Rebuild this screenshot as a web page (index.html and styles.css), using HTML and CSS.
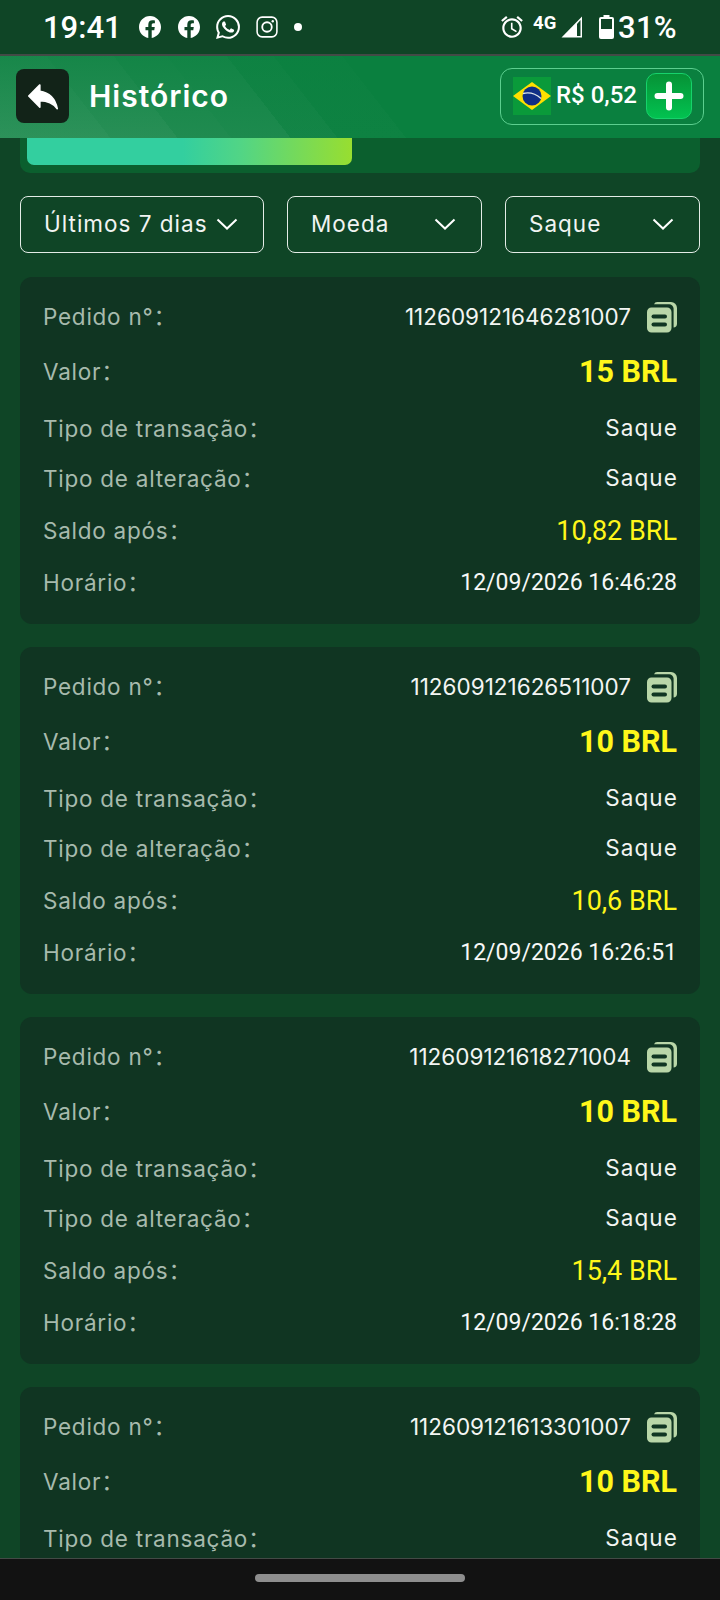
FILE: index.html
```html
<!DOCTYPE html>
<html lang="pt-BR">
<head>
<meta charset="utf-8">
<title>Histórico</title>
<link rel="stylesheet" href="styles.css">
</head>
<body>
<svg class="defs" width="0" height="0" aria-hidden="true">
  <symbol id="copy" viewBox="0 0 30 32">
    <path d="M7 3.200A3.500 3.500 0 0 1 10.500 1H24a6 6 0 0 1 6 6v16a4 4 0 0 1-3.400 3.600V7.500A4.500 4.500 0 0 0 22 3.200Z" fill="#b9d6a8"/>
    <path d="M4.500 6.500H20a4.500 4.500 0 0 1 4.500 4.500v16a4.500 4.500 0 0 1-4.500 4.500H4.500A4.500 4.500 0 0 1 0 27V11a4.500 4.500 0 0 1 4.500-4.500Z" fill="#b9d6a8"/>
    <rect x="4.500" y="13.500" width="15.500" height="4" rx="2" fill="#103522"/>
    <rect x="4.500" y="21.500" width="15.500" height="4" rx="2" fill="#103522"/>
  </symbol>
  <symbol id="fb" viewBox="0 0 24 24">
    <path d="M24 12.073c0-6.627-5.373-12-12-12s-12 5.373-12 12c0 5.990 4.388 10.954 10.125 11.854v-8.385H7.078v-3.470h3.047V9.430c0-3.007 1.792-4.669 4.533-4.669 1.312 0 2.686.235 2.686.235v2.953H15.830c-1.491 0-1.956.925-1.956 1.874v2.250h3.328l-.532 3.470h-2.796v8.385C19.612 23.027 24 18.062 24 12.073z" fill="#fff"/>
  </symbol>
  <symbol id="chev" viewBox="0 0 22 14">
    <path d="M1.500 2.500 11 11.500 20.500 2.500" fill="none" stroke="#fff" stroke-width="2"/>
  </symbol>
</svg>

<header class="status">
  <div class="status-left">
    <span class="clock">19:41</span>
    <svg class="si" viewBox="0 0 24 24"><use href="#fb"/></svg>
    <svg class="si" viewBox="0 0 24 24"><use href="#fb"/></svg>
    <svg class="si wa" viewBox="0 0 24 24"><path d="M17.472 14.382c-.297-.149-1.758-.867-2.030-.967-.273-.099-.471-.148-.670.150-.197.297-.767.966-.940 1.164-.173.199-.347.223-.644.075-.297-.150-1.255-.463-2.390-1.475-.883-.788-1.480-1.761-1.653-2.059-.173-.297-.018-.458.130-.606.134-.133.298-.347.446-.520.149-.174.198-.298.298-.497.099-.198.050-.371-.025-.520-.075-.149-.669-1.612-.916-2.207-.242-.579-.487-.500-.669-.510-.173-.008-.371-.010-.570-.010-.198 0-.520.074-.792.372-.272.297-1.040 1.016-1.040 2.479 0 1.462 1.065 2.875 1.213 3.074.149.198 2.096 3.200 5.077 4.487.709.306 1.262.489 1.694.625.712.227 1.360.195 1.871.118.571-.085 1.758-.719 2.006-1.413.248-.694.248-1.289.173-1.413-.074-.124-.272-.198-.570-.347m-5.421 7.403h-.004a9.870 9.870 0 01-5.031-1.378l-.361-.214-3.741.982.998-3.648-.235-.374a9.860 9.860 0 01-1.510-5.260c.001-5.450 4.436-9.884 9.888-9.884 2.640 0 5.122 1.030 6.988 2.898a9.825 9.825 0 012.893 6.994c-.003 5.450-4.437 9.884-9.885 9.884m8.413-18.297A11.815 11.815 0 0012.050 0C5.495 0 .160 5.335.157 11.892c0 2.096.547 4.142 1.588 5.945L.057 24l6.305-1.654a11.882 11.882 0 005.683 1.448h.005c6.554 0 11.890-5.335 11.893-11.893a11.821 11.821 0 00-3.480-8.413z" fill="#fff"/></svg>
    <svg class="si" viewBox="0 0 24 24" fill="none" stroke="#fff"><rect x="1.200" y="1.200" width="21.600" height="21.600" rx="5.500" stroke-width="1.700"/><circle cx="12" cy="12" r="5.200" stroke-width="2"/><circle cx="18.300" cy="5.700" r="1.300" fill="#fff" stroke="none"/></svg>
    <span class="dot"></span>
  </div>
  <div class="status-right">
    <svg class="alarm" viewBox="0 0 24 24"><path d="M22 5.720l-4.600-3.860-1.290 1.530 4.600 3.860L22 5.720zM7.880 3.390L6.600 1.860 2 5.710l1.290 1.530 4.590-3.850zM12.500 8H11v6l4.750 2.850.75-1.230-4-2.370V8zM12 4c-4.970 0-9 4.030-9 9s4.020 9 9 9c4.970 0 9-4.030 9-9s-4.030-9-9-9zm0 16c-3.870 0-7-3.130-7-7s3.130-7 7-7 7 3.130 7 7-3.130 7-7 7z" fill="#fff"/></svg>
    <span class="net">4G</span>
    <svg class="signal" viewBox="0 0 22 22"><path d="M21 .500V21.500H.500Z" fill="#fff"/><path d="M19.500 4V20H16V8Z" fill="#0f4526"/></svg>
    <svg class="battery" viewBox="0 0 15 24"><path d="M4.500 0h6v2H13a2 2 0 0 1 2 2v18a2 2 0 0 1-2 2H2a2 2 0 0 1-2-2V4a2 2 0 0 1 2-2h2.500Z" fill="#fff"/><rect x="2" y="4" width="11" height="10" fill="#0f4526"/></svg>
    <span class="pct">31%</span>
  </div>
</header>

<div class="appbar">
  <button class="back" type="button">
    <svg viewBox="0 0 24 24"><path d="M10 9V5l-7 7 7 7v-4.100c5 0 8.500 1.600 11 5.100-1-5-4-10-11-11z" fill="#fff" stroke="#fff" stroke-width="1" stroke-linejoin="round"/></svg>
  </button>
  <h1 class="title">Histórico</h1>
  <div class="balance">
    <svg class="flag" viewBox="0 0 38 38">
      <rect width="38" height="38" fill="#0a9a3a"/>
      <path d="M19 5 38 19 19 33 0 19Z" fill="#fedf00"/>
      <circle cx="19" cy="19" r="9.500" fill="#0f2f86"/>
      <path d="M10 16.500c6-1.500 13 .5 18 5" fill="none" stroke="#dfe8e8" stroke-width="1.300"/>
    </svg>
    <span class="amount">R$ 0,52</span>
    <span class="plus">
      <svg viewBox="0 0 30 30"><path d="M15 3.500v23M3.500 15h23" stroke="#fff" stroke-width="6" stroke-linecap="round"/></svg>
    </span>
  </div>
</div>

<main class="content">
  <div class="progress-card"><div class="progress-fill"></div></div>

  <div class="filters">
    <button class="filter f-date" type="button"><span>Últimos 7 dias</span><svg class="chev"><use href="#chev"/></svg></button>
    <button class="filter f-coin" type="button"><span>Moeda</span><svg class="chev"><use href="#chev"/></svg></button>
    <button class="filter f-type" type="button"><span>Saque</span><svg class="chev"><use href="#chev"/></svg></button>
  </div>

  <article class="card">
    <div class="row r-id"><span class="label">Pedido n°：</span><span class="order">112609121646281007<svg class="copy"><use href="#copy"/></svg></span></div>
    <div class="row r-val"><span class="label">Valor：</span><span class="value-big">15 BRL</span></div>
    <div class="row r-tx"><span class="label">Tipo de transação：</span><span class="text">Saque</span></div>
    <div class="row r-alt"><span class="label">Tipo de alteração：</span><span class="text">Saque</span></div>
    <div class="row r-bal"><span class="label">Saldo após：</span><span class="value">10,82 BRL</span></div>
    <div class="row r-time"><span class="label">Horário：</span><span class="time">12/09/2026 16:46:28</span></div>
  </article>

  <article class="card">
    <div class="row r-id"><span class="label">Pedido n°：</span><span class="order">112609121626511007<svg class="copy"><use href="#copy"/></svg></span></div>
    <div class="row r-val"><span class="label">Valor：</span><span class="value-big">10 BRL</span></div>
    <div class="row r-tx"><span class="label">Tipo de transação：</span><span class="text">Saque</span></div>
    <div class="row r-alt"><span class="label">Tipo de alteração：</span><span class="text">Saque</span></div>
    <div class="row r-bal"><span class="label">Saldo após：</span><span class="value">10,6 BRL</span></div>
    <div class="row r-time"><span class="label">Horário：</span><span class="time">12/09/2026 16:26:51</span></div>
  </article>

  <article class="card">
    <div class="row r-id"><span class="label">Pedido n°：</span><span class="order">112609121618271004<svg class="copy"><use href="#copy"/></svg></span></div>
    <div class="row r-val"><span class="label">Valor：</span><span class="value-big">10 BRL</span></div>
    <div class="row r-tx"><span class="label">Tipo de transação：</span><span class="text">Saque</span></div>
    <div class="row r-alt"><span class="label">Tipo de alteração：</span><span class="text">Saque</span></div>
    <div class="row r-bal"><span class="label">Saldo após：</span><span class="value">15,4 BRL</span></div>
    <div class="row r-time"><span class="label">Horário：</span><span class="time">12/09/2026 16:18:28</span></div>
  </article>

  <article class="card">
    <div class="row r-id"><span class="label">Pedido n°：</span><span class="order">112609121613301007<svg class="copy"><use href="#copy"/></svg></span></div>
    <div class="row r-val"><span class="label">Valor：</span><span class="value-big">10 BRL</span></div>
    <div class="row r-tx"><span class="label">Tipo de transação：</span><span class="text">Saque</span></div>
  </article>
</main>

<footer class="navbar"><span class="pill"></span></footer>
</body>
</html>
```

FILE: styles.css
```css
* { box-sizing: border-box; }

html, body {
  margin: 0;
  height: 100%;
}

body {
  width: 720px;
  height: 1600px;
  overflow: hidden;
  display: flex;
  flex-direction: column;
  background: #0f4526;
  color: #fff;
  font-family: Inter, "Noto Sans CJK SC", sans-serif;
}

.defs { position: absolute; }

/* system status bar */
.status {
  flex: 0 0 54px;
  display: flex;
  justify-content: space-between;
  align-items: center;
  padding: 0 43px;
  font-family: Roboto, sans-serif;
}

.status-left, .status-right {
  display: flex;
  align-items: center;
}

.clock {
  font-size: 31px;
  font-weight: 500;
  width: 96px;
}

.si {
  width: 22px;
  height: 22px;
  margin-right: 17px;
}

.wa { width: 24px; height: 24px; margin-left: -1px; margin-right: 16px; }
.dot { width: 8px; height: 8px; border-radius: 50%; background: #fff; margin-left: -1px; }

.alarm { width: 26px; height: 26px; margin-right: 8px; }
.net { font-size: 18.500px; font-weight: 700; align-self: flex-start; margin-top: 3px; width: 28px; }
.signal { width: 22px; height: 22px; margin-right: 16px; }
.battery { width: 15px; height: 24px; margin-right: 4px; }
.pct { font-size: 31px; font-weight: 500; letter-spacing: .3px; }

/* page app bar */
.appbar {
  flex: 0 0 84px;
  display: flex;
  align-items: center;
  padding: 0 16px 2px;
  border-top: 2px solid #434a46;
  background:
    linear-gradient(to bottom, rgba(10,128,63,.6), rgba(10,128,63,0)),
    linear-gradient(52deg,
      rgba(255,255,255,.14) 0 87px,
      rgba(255,255,255,.12) 87px 140px,
      rgba(255,255,255,.09) 140px 182px,
      rgba(255,255,255,.08) 182px 229px,
      rgba(255,255,255,.04) 229px 266px,
      rgba(255,255,255,.015) 266px 320px,
      transparent 320px),
    #0a803f;
}

.back {
  width: 53px;
  height: 54px;
  padding: 0;
  border: 0;
  border-radius: 8px;
  background: #122318;
  display: flex;
  align-items: center;
  justify-content: center;
}

.back svg { width: 38px; height: 38px; }

.title {
  margin: 0 0 0 20px;
  font-size: 30px;
  font-weight: 600;
  letter-spacing: 1px;
  flex: 1;
}

.balance {
  width: 204px;
  height: 57px;
  display: flex;
  align-items: center;
  padding: 0 11px 0 12px;
  border: 1px solid #5ccf8f;
  border-radius: 12px;
}

.flag { width: 38px; height: 38px; flex: none; }

.amount {
  font-family: Roboto, sans-serif;
  font-size: 24px;
  font-weight: 500;
  margin: 0 0 3px 5px;
  flex: 1;
  white-space: nowrap;
}

.plus {
  width: 46px;
  height: 46px;
  border-radius: 10px;
  border: 1px solid #16d36b;
  background: linear-gradient(#069236, #02c250);
  display: flex;
  align-items: center;
  justify-content: center;
}

.plus svg { width: 30px; height: 30px; }

/* scrolled content */
.content {
  flex: 1;
  min-height: 0;
  overflow: hidden;
  padding: 0 20px;
  display: flex;
  flex-direction: column;
}

.progress-card {
  flex: 0 0 35px;
  padding: 0 7px 8px;
  background: #0b5f2e;
  border-radius: 0 0 10px 10px;
}

.progress-fill {
  width: 325px;
  height: 100%;
  border-radius: 0 0 7px 7px;
  background: linear-gradient(90deg, #33cf9f 0 48%, #52d585 66%, #98de30 100%);
}

.filters {
  display: flex;
  gap: 23px;
  margin: 23px 0 23.500px;
}

.filter {
  height: 57px;
  padding: 0 24px 2px 23px;
  border: 1px solid #e4ece7;
  border-radius: 8px;
  background: none;
  color: #f1f4f2;
  font: 400 22.500px Inter, sans-serif;
  letter-spacing: 1px;
  display: flex;
  align-items: center;
  justify-content: space-between;
  white-space: nowrap;
}

.f-date { width: 244px; }
.f-coin { width: 195px; }
.f-type { width: 195px; }

.chev { width: 22px; height: 14px; flex: none; margin-right: 1px; }

/* transaction cards */
.card {
  flex: none;
  background: #103522;
  border-radius: 12px;
  padding: 20px 23px 21px;
  margin-bottom: 23px;
}

.row {
  display: flex;
  justify-content: space-between;
  align-items: center;
  height: 40px;
  white-space: nowrap;
}

.r-val { margin-top: 15px; }
.r-tx { margin-top: 17px; }
.r-alt { margin-top: 10px; }
.r-bal { margin-top: 12px; }
.r-time { margin-top: 12px; }

.label {
  font-size: 22.500px;
  letter-spacing: .75px;
  color: #a7baad;
  padding-bottom: 3px;
}

.text, .order {
  font-size: 22.500px;
  color: #f3f5f3;
}

.text {
  letter-spacing: 1.100px;
  margin-right: -1px;
  padding-bottom: 2px;
}

.order {
  display: flex;
  align-items: center;
}

.copy {
  width: 30px;
  height: 32px;
  margin-left: 16px;
}

.value-big, .value, .time {
  font-family: Roboto, sans-serif;
}

.value-big {
  font-size: 30.500px;
  font-weight: 700;
  color: #fff71a;
  margin-bottom: 1px;
}

.value {
  font-size: 27px;
  color: #fff71a;
}

.time {
  font-size: 23px;
  font-weight: 400;
  color: #f7f8f7;
}

/* system gesture bar */
.navbar {
  flex: 0 0 42px;
  background: #121212;
  border-top: 1px solid #434a46;
  display: flex;
  justify-content: center;
  padding-top: 15px;
}

.pill {
  width: 210px;
  height: 8px;
  border-radius: 4px;
  background: #8e8e8e;
}
```
